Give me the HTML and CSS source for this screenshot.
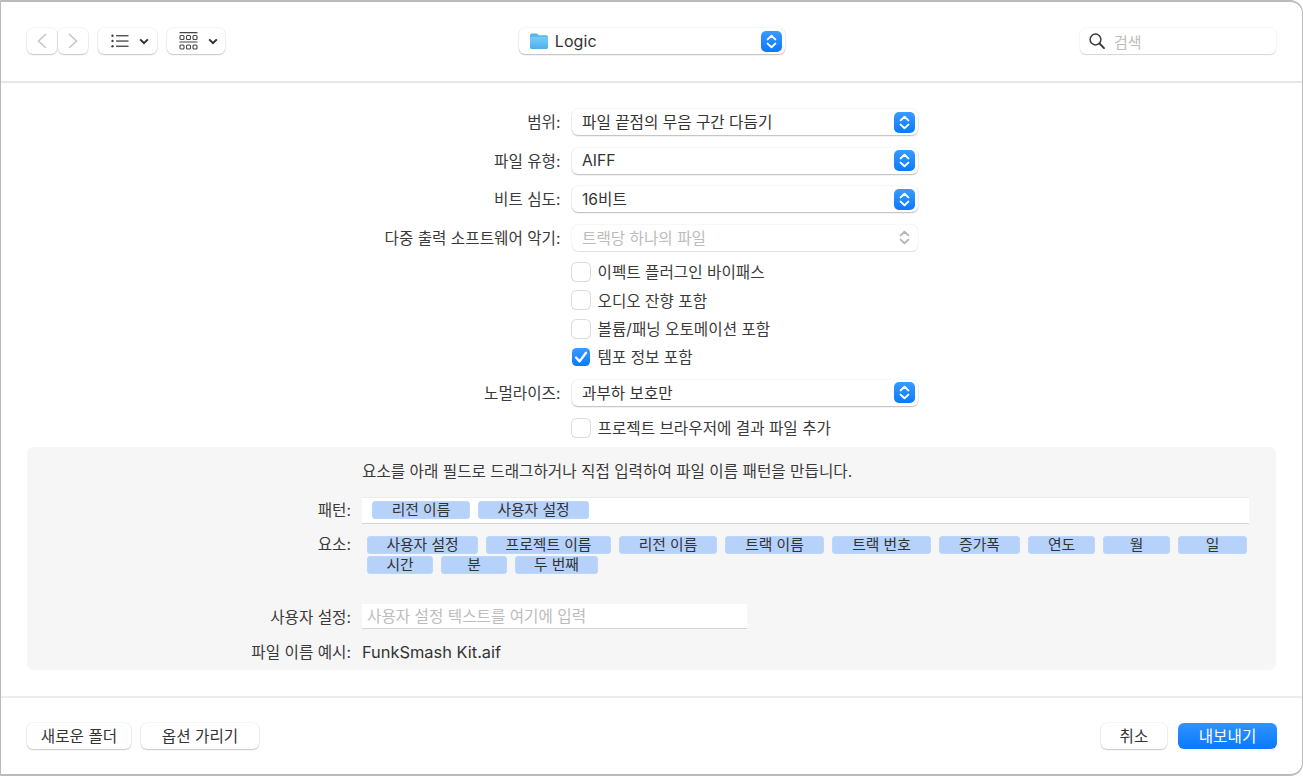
FILE: index.html
```html
<!DOCTYPE html>
<html lang="ko">
<head>
<meta charset="utf-8">
<title>Logic 내보내기</title>
<link rel="stylesheet" href="styles.css">
</head>
<body>
<svg class="defs" width="0" height="0" aria-hidden="true">
  <symbol id="updown" viewBox="0 0 21 21"><path d="M6.6 8.4 10.5 4.7l3.9 3.7M6.6 12.6l3.9 3.7 3.9-3.7" fill="none" stroke="currentColor" stroke-width="1.9" stroke-linecap="round" stroke-linejoin="round"/></symbol>
</svg>
<div class="window">
  <header class="toolbar">
    <div class="tool-left">
      <div class="nav-pair">
        <button class="btn nav"><svg width="14" height="18" viewBox="0 0 14 18"><path d="M11 2 3.5 9l7.5 7" fill="none" stroke="#c4c4c4" stroke-width="1.4"/></svg></button>
        <button class="btn nav"><svg width="14" height="18" viewBox="0 0 14 18"><path d="M3 2l7.5 7L3 16" fill="none" stroke="#c4c4c4" stroke-width="1.4"/></svg></button>
      </div>
      <button class="btn view view-list">
        <svg width="18" height="14" viewBox="0 0 18 14"><g fill="#444"><circle cx="1.5" cy="1.8" r="1.2"/><circle cx="1.5" cy="7" r="1.2"/><circle cx="1.5" cy="12.2" r="1.2"/><rect x="5" y="1.1" width="12.500" height="1.3"/><rect x="5" y="6.4" width="12.500" height="1.3"/><rect x="5" y="11.6" width="12.500" height="1.3"/></g></svg>
        <svg width="10" height="7" viewBox="0 0 10 7"><path d="M1.2 1.4 5 5.2l3.8-3.8" fill="none" stroke="#2e2e2e" stroke-width="2"/></svg>
      </button>
      <button class="btn view view-grid">
        <svg width="19" height="19" viewBox="0 0 19 19"><g fill="none" stroke="#444" stroke-width="1.100"><path d="M.5.7h18M.5 10h18" stroke-width="1.200"/><rect x="1" y="3.500" width="4" height="4" rx="1"/><rect x="7.500" y="3.500" width="4" height="4" rx="1"/><rect x="14" y="3.500" width="4" height="4" rx="1"/><rect x="1" y="13" width="4" height="4" rx="1"/><rect x="7.500" y="13" width="4" height="4" rx="1"/><rect x="14" y="13" width="4" height="4" rx="1"/></g></svg>
        <svg width="10" height="7" viewBox="0 0 10 7"><path d="M1.2 1.4 5 5.2l3.8-3.8" fill="none" stroke="#2e2e2e" stroke-width="2"/></svg>
      </button>
    </div>
    <div class="select location">
      <svg class="folder" width="20" height="18" viewBox="0 0 20 18"><defs><linearGradient id="fg" x1="0" y1="0" x2="0" y2="1"><stop offset="0" stop-color="#79cdf7"/><stop offset="1" stop-color="#4db0ee"/></linearGradient></defs><path d="M1 3.500C1 2.300 1.700 1.500 2.800 1.500h4.400c.8 0 1.200.3 1.700.9l.8.900h7.500c1.100 0 1.800.7 1.800 1.800V15c0 1.100-.7 1.900-1.800 1.900H2.800C1.700 16.900 1 16.100 1 15Z" fill="#58b3e8"/><path d="M1 6c0-.8.500-1.300 1.300-1.300h15.400c.8 0 1.300.5 1.300 1.300v9c0 1.100-.7 1.900-1.800 1.900H2.800C1.700 16.900 1 16.100 1 15Z" fill="url(#fg)"/></svg>
      <span class="select-text">Logic</span>
      <span class="stepper"><svg width="21" height="21"><use href="#updown"/></svg></span>
    </div>
    <div class="search">
      <svg width="18" height="18" viewBox="0 0 18 18"><circle cx="7.500" cy="7.500" r="5.400" fill="none" stroke="#3a3a3a" stroke-width="1.5"/><path d="m11.500 11.500 4.500 4.600" stroke="#3a3a3a" stroke-width="1.900" stroke-linecap="round"/></svg>
      <span class="search-text">검색</span>
    </div>
  </header>

  <main class="main">
    <section class="form">
      <div class="row row-select"><span class="label">범위:</span><div class="select field"><span class="select-text">파일 끝점의 무음 구간 다듬기</span><span class="stepper"><svg width="21" height="21"><use href="#updown"/></svg></span></div></div>
      <div class="row row-select"><span class="label">파일 유형:</span><div class="select field"><span class="select-text">AIFF</span><span class="stepper"><svg width="21" height="21"><use href="#updown"/></svg></span></div></div>
      <div class="row row-select"><span class="label">비트 심도:</span><div class="select field"><span class="select-text">16비트</span><span class="stepper"><svg width="21" height="21"><use href="#updown"/></svg></span></div></div>
      <div class="row row-select"><span class="label">다중 출력 소프트웨어 악기:</span><div class="select field disabled"><span class="select-text">트랙당 하나의 파일</span><span class="stepper off"><svg width="21" height="21"><use href="#updown"/></svg></span></div></div>
      <div class="row row-check first-check"><span class="label"></span><span class="check"></span><span class="check-text">이펙트 플러그인 바이패스</span></div>
      <div class="row row-check"><span class="label"></span><span class="check"></span><span class="check-text">오디오 잔향 포함</span></div>
      <div class="row row-check"><span class="label"></span><span class="check"></span><span class="check-text">볼륨/패닝 오토메이션 포함</span></div>
      <div class="row row-check"><span class="label"></span><span class="check on"><svg width="18" height="18" viewBox="0 0 18 18"><path d="M4 9.500 7.600 13.400 14 4.700" fill="none" stroke="#fff" stroke-width="2.300" stroke-linecap="round" stroke-linejoin="round"/></svg></span><span class="check-text">템포 정보 포함</span></div>
      <div class="row row-select normal"><span class="label">노멀라이즈:</span><div class="select field"><span class="select-text">과부하 보호만</span><span class="stepper"><svg width="21" height="21"><use href="#updown"/></svg></span></div></div>
      <div class="row row-check last-check"><span class="label"></span><span class="check"></span><span class="check-text">프로젝트 브라우저에 결과 파일 추가</span></div>
    </section>

    <section class="panel">
      <p class="intro">요소를 아래 필드로 드래그하거나 직접 입력하여 파일 이름 패턴을 만듭니다.</p>
      <div class="p-row pattern-row">
        <span class="p-label">패턴:</span>
        <div class="pattern">
          <span class="token w98">리전 이름</span>
          <span class="token w111">사용자 설정</span>
        </div>
      </div>
      <div class="p-row elements-row">
        <span class="p-label">요소:</span>
        <div class="elements">
          <span class="token w111">사용자 설정</span>
          <span class="token w125">프로젝트 이름</span>
          <span class="token w98">리전 이름</span>
          <span class="token w99">트랙 이름</span>
          <span class="token w99">트랙 번호</span>
          <span class="token w81">증가폭</span>
          <span class="token w67">연도</span>
          <span class="token w67">월</span>
          <span class="token w69">일</span>
          <span class="token w66">시간</span>
          <span class="token w66">분</span>
          <span class="token w83">두 번째</span>
        </div>
      </div>
      <div class="p-row custom-row">
        <span class="p-label">사용자 설정:</span>
        <div class="custom">사용자 설정 텍스트를 여기에 입력</div>
      </div>
      <div class="p-row example-row">
        <span class="p-label example-label">파일 이름 예시:</span>
        <span class="example">FunkSmash Kit.aif</span>
      </div>
    </section>
  </main>

  <footer class="footer">
    <div class="foot-group">
      <button class="btn foot w104">새로운 폴더</button>
      <button class="btn foot w118">옵션 가리기</button>
    </div>
    <div class="foot-group foot-right">
      <button class="btn foot w66f">취소</button>
      <button class="btn foot primary">내보내기</button>
    </div>
  </footer>
</div>
</body>
</html>
```
FILE: styles.css
```css
* { box-sizing: border-box; }
html, body { margin: 0; padding: 0; background: #fff; }
body {
  height: 777px;
  overflow: hidden;
  font-family: "Inter", "Noto Sans CJK KR", sans-serif;
  font-size: 15.650px;
  color: #333;
}
.defs { position: absolute; }
.window {
  width: 1303px;
  height: 776px;
  display: flex;
  flex-direction: column;
  background: #fff;
  border-style: solid;
  border-color: #bababa;
  border-width: 2px 1px 2px 1px;
  border-radius: 1px 13px 13px 1px;
  overflow: hidden;
}

/* toolbar */
.toolbar {
  height: 81px;
  flex: none;
  border-bottom: 2px solid #e7e7e7;
  display: grid;
  grid-template-columns: 1fr 266.500px 1fr;
  align-items: center;
  padding: 0 26px 1px;
}
.tool-left { display: flex; gap: 10px; align-items: center; }
.btn {
  font: inherit;
  color: #333;
  background: #fff;
  border: 0;
  padding: 0;
  height: 26px;
  border-radius: 6px;
  box-shadow: 0 0 0 .5px rgba(0,0,0,.07), 0 1px 1.500px rgba(0,0,0,.2);
  display: inline-flex;
  align-items: center;
  justify-content: center;
}
.nav-pair { display: flex; gap: 1px; }
.nav { width: 30px; }
.view { justify-content: flex-start; }
.view-list { width: 59px; padding-left: 13px; gap: 10px; }
.view-grid { width: 58px; padding-left: 12px; gap: 10px; }
.location { justify-self: start; width: 266.500px; margin-left: .5px; }
.location.select { padding-left: 10px; }
.location .select-text { font-size: 16px; letter-spacing: .1px; margin-left: 6px; }
.folder { flex: none; }
.search {
  justify-self: end;
  width: 196px;
  height: 26px;
  border-radius: 6px;
  display: flex;
  align-items: center;
  gap: 8px;
  padding-left: 8px;
  box-shadow: 0 0 0 .5px rgba(0,0,0,.06), 0 1px 1px rgba(0,0,0,.14);
}
.search-text { color: #bdbdbd; font-size: 15px; }

/* select */
.select {
  height: 26px;
  background: #fff;
  border-radius: 6px;
  box-shadow: 0 0 0 .5px rgba(0,0,0,.06), 0 1px 1.500px rgba(0,0,0,.25);
  display: flex;
  align-items: center;
  padding-left: 10.500px;
}
.select-text { flex: 1; color: #333; padding-bottom: 1px; }
.stepper {
  width: 21px;
  height: 21px;
  margin-right: 3px;
  border-radius: 5px;
  color: #fff;
  background: linear-gradient(#3b9bff, #0a79ff);
  flex: none;
}
.stepper svg { display: block; }
.stepper.off { background: none; color: #b5b5b5; }
.disabled { box-shadow: 0 0 0 .5px rgba(0,0,0,.05), 0 .5px 1px rgba(0,0,0,.1); }
.disabled .select-text { color: #bcbcbc; }

/* form rows */
.main { flex: 1; display: flex; flex-direction: column; }
.form { padding-top: 26px; }
.row { display: flex; align-items: center; }
.label {
  width: 559.500px;
  flex: none;
  text-align: right;
  color: #3a3a3a;
  margin-right: 11px;
  padding-bottom: 1px;
}
.field { width: 346.500px; }
.row-select { height: 26px; margin-bottom: 12.600px; }
.row-check { height: 20px; margin-bottom: 8.300px; }
.first-check { margin-top: -1.400px; }
.normal { margin-top: 13.100px; margin-bottom: 11.600px; }
.check {
  width: 18px;
  height: 18px;
  flex: none;
  border-radius: 4.500px;
  background: #fff;
  box-shadow: 0 0 0 1px #dcdcdc, 0 .5px 1px rgba(0,0,0,.1);
  margin-left: .5px;
}
.check.on { background: linear-gradient(#3b9bff, #0a79ff); box-shadow: none; }
.check svg { display: block; }
.check-text { margin-left: 7.500px; color: #3a3a3a; }
.last-check { margin-bottom: 9.400px; }

/* panel */
.panel {
  margin: 0 26px;
  height: 223px;
  background: #f6f6f6;
  border-radius: 7px;
  padding: 14px 27px 0 0;
}
.intro { margin: 0 0 0 335px; height: 20px; line-height: 20px; padding-top: 1px; color: #3a3a3a; }
.p-row { display: flex; }
.p-label {
  width: 324px;
  flex: none;
  margin-right: 11px;
  text-align: right;
  color: #3a3a3a;
}
.pattern-row { margin-top: 16px; align-items: center; height: 27px; }
.pattern-row .p-label { padding-bottom: 2px; }
.pattern {
  flex: 1;
  height: 27px;
  background: #fff;
  border-top: 1px solid #ececec;
  border-bottom: 1.500px solid #d6d6d6;
  display: flex;
  gap: 8px;
  padding: 3px 0 0 10px;
}
.token {
  height: 18px;
  line-height: 16px;
  text-align: center;
  background: #b6d2fb;
  border: 1px solid #bcd7fb;
  border-radius: 3px;
  font-size: 14.800px;
  color: #333;
  flex: none;
}
.w98 { width: 98px; }
.w111 { width: 111px; }
.w125 { width: 125px; }
.w99 { width: 99px; }
.w81 { width: 81px; }
.w67 { width: 67px; }
.w69 { width: 69px; }
.w66 { width: 66px; }
.w83 { width: 83px; }
.elements-row { margin-top: 12px; height: 38px; }
.elements-row .p-label { line-height: 17px; }
.elements {
  flex: 1;
  display: flex;
  flex-wrap: wrap;
  gap: 2px 8px;
  align-content: flex-start;
  padding-left: 5px;
  padding-right: 2px;
}
.custom-row { margin-top: 30.500px; height: 25px; align-items: center; }
.custom {
  width: 385px;
  height: 25px;
  background: #fff;
  border-bottom: 1.500px solid #d4d4d4;
  color: #bcbcbc;
  line-height: 24px;
  padding: 1px 0 0 5px;
}
.example-row { margin-top: 12.500px; height: 20px; align-items: center; }
.example-label { padding-bottom: 1px; }
.example { font-size: 16.400px; color: #333; }

/* footer */
.footer {
  margin-top: auto;
  height: 78px;
  flex: none;
  border-top: 2px solid #ececec;
  display: flex;
  justify-content: space-between;
  align-items: flex-start;
  padding: 25px 25px 0 26px;
}
.foot-group { display: flex; gap: 10px; }
.foot-right { gap: 11px; }
.foot { padding-bottom: 1px; }
.w104 { width: 104px; }
.w118 { width: 118px; }
.w66f { width: 66px; }
.primary {
  width: 99px;
  color: #fff;
  background: linear-gradient(#2f93ff, #0a79ff);
  box-shadow: none;
}
```
